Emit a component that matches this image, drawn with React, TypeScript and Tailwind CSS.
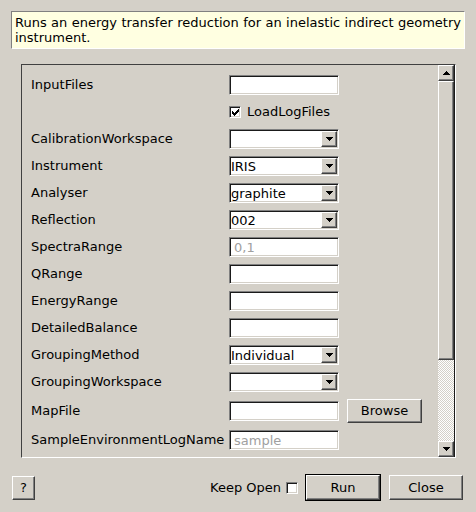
import { FC, ReactNode } from "react";

const sunken =
  "border border-t-[#808080] border-l-[#808080] border-r-white border-b-white shadow-[inset_1px_1px_0_#1a1a1a,inset_-1px_-1px_0_#d4d0c8]";
const raised =
  "border border-t-white border-l-white border-r-[#404040] border-b-[#404040] shadow-[inset_-1px_-1px_0_#808080]";

const Arrow: FC<{ up?: boolean }> = ({ up }) => (
  <svg width="7" height="4" viewBox="0 0 7 4" shapeRendering="crispEdges">
    {up ? (
      <>
        <rect x="3" y="0" width="1" height="1" fill="#000" />
        <rect x="2" y="1" width="3" height="1" fill="#000" />
        <rect x="1" y="2" width="5" height="1" fill="#000" />
        <rect x="0" y="3" width="7" height="1" fill="#000" />
      </>
    ) : (
      <>
        <rect x="0" y="0" width="7" height="1" fill="#000" />
        <rect x="1" y="1" width="5" height="1" fill="#000" />
        <rect x="2" y="2" width="3" height="1" fill="#000" />
        <rect x="3" y="3" width="1" height="1" fill="#000" />
      </>
    )}
  </svg>
);

const Input: FC<{ placeholder?: string }> = ({ placeholder }) => (
  <div className={`w-[110px] h-5 bg-white flex items-center pl-[4px] ${sunken}`}>
    <span className="text-[13px] text-[#a0a0a0] leading-none">{placeholder}</span>
  </div>
);

const Combo: FC<{ value?: string }> = ({ value }) => (
  <div className={`w-[110px] h-5 bg-white flex items-center p-px ${sunken}`}>
    <span className="flex-1 text-[13px] text-black leading-none">{value}</span>
    <div className={`w-4 h-4 bg-[#d4d0c8] flex items-center justify-center ${raised}`}>
      <Arrow />
    </div>
  </div>
);

const Check: FC<{ checked?: boolean }> = ({ checked }) => (
  <div className={`w-3 h-3 bg-white flex items-center justify-center ${sunken}`}>
    {checked && (
      <svg width="7" height="7" viewBox="0 0 7 7" shapeRendering="crispEdges">
        <path d="M0 2h1v1h1v1h1v-1h1v-1h1v-1h1v-1h1v3h-1v1h-1v1h-1v1h-1v1h-1v-1h-1v-1h-1z" fill="#000" />
      </svg>
    )}
  </div>
);

const Row: FC<{ label?: string; children: ReactNode }> = ({ label, children }) => (
  <div className="flex items-center">
    <span className="w-[198px] shrink-0 text-[13px] text-black whitespace-nowrap">{label}</span>
    {children}
  </div>
);

const App: FC = () => (
  <div className="w-[476px] h-[512px] bg-[#d4d0c8] flex flex-col font-['DejaVu_Sans',sans-serif] overflow-hidden">
    <div className="mt-[11px] mx-[11px] h-[38px] bg-[#ffffe1] border border-t-[#808080] border-l-[#808080] border-r-white border-b-white p-[3px] text-[13px] leading-[15px] text-black text-justify">
      Runs an energy transfer reduction for an inelastic indirect geometry instrument.
    </div>

    <div className="mt-[15px] ml-[21px] w-[435px] h-[394px] flex border border-t-[#404040] border-l-[#404040] border-r-white border-b-white">
      <div className="flex-1 flex flex-col gap-[7px] pt-[10px] pl-[9px] overflow-hidden">
        <Row label="InputFiles"><Input /></Row>
        <Row>
          <div className="flex items-center gap-[6px] h-5">
            <Check checked />
            <span className="text-[13px] text-black">LoadLogFiles</span>
          </div>
        </Row>
        <Row label="CalibrationWorkspace"><Combo /></Row>
        <Row label="Instrument"><Combo value="IRIS" /></Row>
        <Row label="Analyser"><Combo value="graphite" /></Row>
        <Row label="Reflection"><Combo value="002" /></Row>
        <Row label="SpectraRange"><Input placeholder="0,1" /></Row>
        <Row label="QRange"><Input /></Row>
        <Row label="EnergyRange"><Input /></Row>
        <Row label="DetailedBalance"><Input /></Row>
        <Row label="GroupingMethod"><Combo value="Individual" /></Row>
        <Row label="GroupingWorkspace"><Combo /></Row>
        <Row label="MapFile">
          <div className="flex items-center gap-2">
            <Input />
            <button className={`w-[75px] h-6 bg-[#d4d0c8] text-[13px] text-black ${raised}`}>Browse</button>
          </div>
        </Row>
        <Row label="SampleEnvironmentLogName"><Input placeholder="sample" /></Row>
      </div>

      <div className="w-[17px] flex flex-col border-r border-[#1a1a1a]">
        <div className={`h-4 shrink-0 bg-[#d4d0c8] flex items-center justify-center ${raised}`}>
          <Arrow up />
        </div>
        <div className={`h-[279px] shrink-0 bg-[#d4d0c8] ${raised}`} />
        <div className="flex-1 bg-[repeating-conic-gradient(#ffffff_0_25%,#d4d0c8_0_50%)] bg-[length:2px_2px]" />
        <div className={`h-4 shrink-0 bg-[#d4d0c8] flex items-center justify-center ${raised}`}>
          <Arrow />
        </div>
      </div>
    </div>

    <div className="h-[54px] pt-[5px] pl-3 pr-[13px] flex items-center">
      <button className={`w-[23px] h-6 bg-[#d4d0c8] text-[13px] text-black ${raised}`}>?</button>
      <div className="flex-1" />
      <span className="text-[13px] text-black">Keep Open</span>
      <div className="ml-[5px]">
        <Check />
      </div>
      <div className="ml-[7px] w-[76px] h-[27px] border border-black">
        <button className={`w-full h-full bg-[#d4d0c8] text-[13px] text-black ${raised}`}>Run</button>
      </div>
      <button className={`ml-2 w-[74px] h-[25px] bg-[#d4d0c8] text-[13px] text-black ${raised}`}>Close</button>
    </div>
  </div>
);

export default App;
